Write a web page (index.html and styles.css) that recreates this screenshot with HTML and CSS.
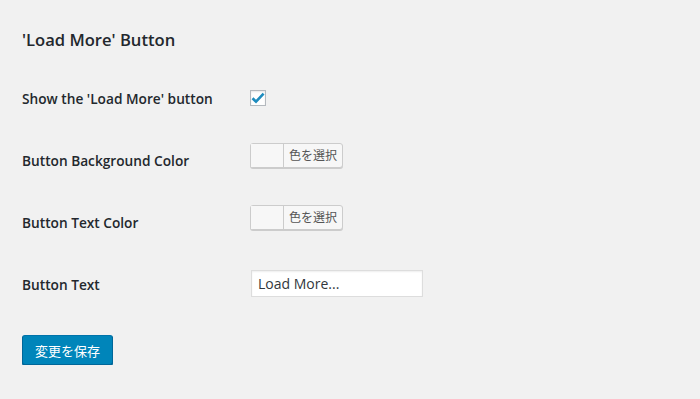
FILE: index.html
```html
<!DOCTYPE html>
<html lang="ja">
<head>
    <meta charset="UTF-8">
    <title>'Load More' Button</title>
    <link rel="stylesheet" href="styles.css">
</head>
<body>
    <div class="wrap">
        <h2>'Load More' Button</h2>

        <div class="form-table">
            <div class="row">
                <div class="label">Show the 'Load More' button</div>
                <div class="field">
                    <span class="checkbox">
                        <svg width="14" height="14" viewBox="0 0 14 14"><path d="M1.5 7.2 L5 10.6 L12.6 2.6" fill="none" stroke="#1e8cbe" stroke-width="2.6"/></svg>
                    </span>
                </div>
            </div>
            <div class="row">
                <div class="label">Button Background Color</div>
                <div class="field">
                    <button class="color-result"><span class="swatch"></span><span class="pick">色を選択</span></button>
                </div>
            </div>
            <div class="row">
                <div class="label">Button Text Color</div>
                <div class="field">
                    <button class="color-result"><span class="swatch"></span><span class="pick">色を選択</span></button>
                </div>
            </div>
            <div class="row">
                <div class="label">Button Text</div>
                <div class="field">
                    <input class="text-input" type="text" value="Load More...">
                </div>
            </div>
        </div>

        <p class="submit"><button class="button-primary">変更を保存</button></p>
    </div>
</body>
</html>
```
FILE: styles.css
```css
body {
    margin: 0;
    background: #f1f1f1;
    color: #23282d;
    font-family: "Open Sans", "Noto Sans CJK JP", sans-serif;
    font-size: 13px;
}
.wrap {
    padding: 0 22px;
}
h2 {
    font-size: 16.6px;
    font-weight: 600;
    line-height: 21px;
    margin: 29px 0 19px;
}
.row {
    display: grid;
    grid-template-columns: 228px 1fr;
    height: 62px;
}
.label {
    padding-top: 21px;
    font-size: 13.7px;
    font-weight: 600;
    line-height: 18px;
}
.field {
    padding-top: 12px;
}
.checkbox {
    display: flex;
    align-items: center;
    justify-content: center;
    width: 16px;
    height: 16px;
    margin-top: 9px;
    border: 1px solid #b4b9be;
    box-sizing: border-box;
    background: #fff;
    box-shadow: inset 0 1px 2px rgba(0, 0, 0, 0.1);
}
.color-result {
    display: flex;
    height: 25px;
    padding: 0;
    border: 1px solid #ccc;
    border-radius: 3px;
    background: #f7f7f7;
    box-shadow: 0 1px 0 #ccc;
    font-family: inherit;
    cursor: pointer;
}
.swatch {
    width: 32px;
    height: 100%;
    background: #f7f7f7;
    border-right: 1px solid #ccc;
}
.pick {
    padding: 0 5px;
    font-size: 12px;
    line-height: 23px;
    color: #555;
}
.text-input {
    margin: 3px 0 0 1px;
    width: 172px;
    height: 27px;
    box-sizing: border-box;
    padding: 2px 6px;
    border: 1px solid #ddd;
    background: #fff;
    box-shadow: inset 0 1px 2px rgba(0, 0, 0, 0.07);
    font-family: inherit;
    font-size: 14px;
    color: #32373c;
}
.submit {
    margin: 18px 0 0;
}
.button-primary {
    height: 30px;
    padding: 0 12px;
    background: #0085ba;
    border: 1px solid;
    border-color: #0073aa #006799 #006799;
    border-radius: 3px;
    box-shadow: 0 1px 0 #006799;
    color: #fff;
    font-family: inherit;
    font-size: 13px;
    cursor: pointer;
}
```
